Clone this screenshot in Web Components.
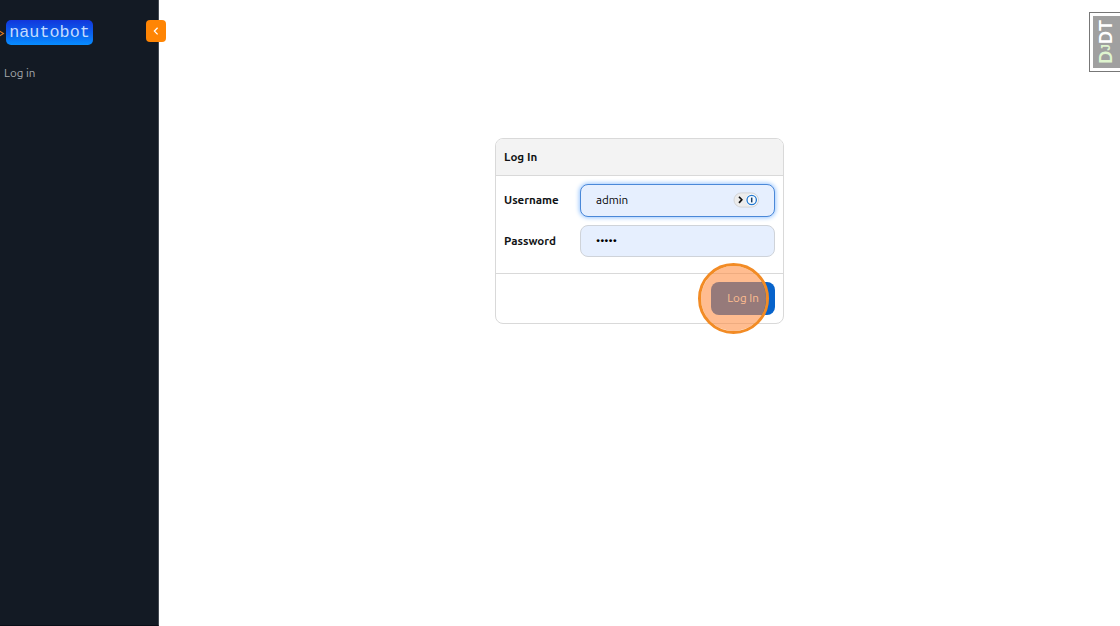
<!DOCTYPE html>
<html lang="en">
<head>
<meta charset="utf-8">
<title>Log In - Nautobot</title>
<style>
    html, body {
        margin: 0;
        height: 100%;
        overflow: hidden;
    }
    body {
        background: #fff;
        color: #111315;
        font: 11.6px/16px Ubuntu, "Noto Sans", sans-serif;
    }
</style>
</head>
<body>
<app-shell>
    <side-nav slot="nav">
        <nav-link>Log in</nav-link>
    </side-nav>
    <login-card heading="Log In">
        <form-field label="Username" value="admin" focused></form-field>
        <form-field label="Password" value="•••••" secret></form-field>
        <submit-button slot="footer">Log In</submit-button>
    </login-card>
</app-shell>
<debug-handle></debug-handle>

<script>
class AppShell extends HTMLElement {

    constructor() {
        super();
        this.shadow = this.attachShadow({ mode: 'open' });
    }

    connectedCallback() {
        this.shadow.innerHTML =
        /*html*/`
        <style>
            :host{
                display: flex;
                height: 100%;
            }
            main{
                flex: 1;
                display: flex;
                justify-content: center;
                align-items: flex-start;
                padding-top: 138px;
            }
        </style>

        <slot name="nav"></slot>
        <main><slot></slot></main>
        `
    }
}

class SideNav extends HTMLElement {

    constructor() {
        super();
        this.shadow = this.attachShadow({ mode: 'open' });
    }

    connectedCallback() {
        this.shadow.innerHTML =
        /*html*/`
        <style>
            :host{
                display: block;
                position: relative;
                box-sizing: border-box;
                flex: 0 0 159px;
                background: #131a24;
                border-right: 1px solid #444a52;
                border-bottom: 1px solid #090e18;
            }
            header{
                display: flex;
                align-items: center;
                padding-top: 20px;
                height: 25px;
            }
            .prompt{
                width: 6px;
                height: 25px;
                flex: none;
            }
            .logo{
                box-sizing: border-box;
                width: 87px;
                height: 25px;
                border-radius: 5px;
                background: linear-gradient(#1236dc, #0b62ee 55%, #078dff);
                color: #c4dcff;
                font: 16.8px/26px "Courier New", "Liberation Mono", monospace;
                text-align: center;
            }
            nav{
                padding: 20px 4px;
            }
            button{
                position: absolute;
                top: 20px;
                right: -8px;
                width: 20px;
                height: 22px;
                padding: 0;
                border: 0;
                border-radius: 4px;
                background: #ff8504;
            }
            button svg{
                display: block;
            }
        </style>

        <header>
            <svg class="prompt" viewBox="0 0 6 25" fill="none" stroke="#e47b20" stroke-width="1.1"><path d="M-.5 11 3.5 13.5-.5 16" /></svg>
            <div class="logo">nautobot</div>
        </header>
        <nav><slot></slot></nav>
        <button aria-label="Collapse">
            <svg width="20" height="22" viewBox="0 0 20 22" fill="none" stroke="#fff" stroke-width="1.3"><path d="M11.6 7.8 8.4 11.1 11.6 14.4" /></svg>
        </button>
        `
    }
}

class NavLink extends HTMLElement {

    constructor() {
        super();
        this.shadow = this.attachShadow({ mode: 'open' });
    }

    connectedCallback() {
        this.shadow.innerHTML =
        /*html*/`
        <style>
            :host{
                display: block;
                color: #a6a9ad;
            }
        </style>
        <slot></slot>
        `
    }
}

class LoginCard extends HTMLElement {

    constructor() {
        super();
        this.shadow = this.attachShadow({ mode: 'open' });
    }

    connectedCallback() {
        this.shadow.innerHTML =
        /*html*/`
        <style>
            :host{
                display: block;
                box-sizing: border-box;
                width: 289px;
                border: 1px solid #d9d9d9;
                border-radius: 8px;
            }
            header{
                box-sizing: border-box;
                height: 37px;
                padding: 10px 8px;
                border-bottom: 1px solid #d9d9d9;
                border-radius: 7px 7px 0 0;
                background: #f3f3f3;
                font-weight: 700;
            }
            section{
                display: flex;
                flex-direction: column;
                gap: 8px;
                padding: 8px 8px 16px;
            }
            footer{
                display: flex;
                justify-content: flex-end;
                padding: 8px;
                border-top: 1px solid #d9d9d9;
            }
        </style>

        <header>${this.getAttribute('heading')}</header>
        <section><slot></slot></section>
        <footer><slot name="footer"></slot></footer>
        `
    }
}

class FormField extends HTMLElement {

    constructor() {
        super();
        this.shadow = this.attachShadow({ mode: 'open' });
    }

    connectedCallback() {
        // the password manager badge only shows in the focused field
        const badge = this.hasAttribute('focused')
            ? `<svg width="26" height="16" viewBox="0 0 26 16" fill="none">
                <rect x="1" y=".9" width="24.5" height="14.2" rx="7.1" fill="#ececec" stroke="#d3d5d8" />
                <path d="M6 4.7 8.8 7.8 6 10.9" stroke="#111" stroke-width="1.7" />
                <circle cx="18.7" cy="8" r="6" fill="#fff" />
                <circle cx="18.7" cy="8" r="4.7" fill="#f5faff" stroke="#2278d0" stroke-width="1.3" />
                <path d="M18.7 5.6v4.8" stroke="#173d66" stroke-width="1.5" />
            </svg>`
            : ''

        this.shadow.innerHTML =
        /*html*/`
        <style>
            :host{
                display: flex;
                align-items: center;
            }
            label{
                flex: 0 0 76px;
                font-weight: 700;
            }
            .control{
                box-sizing: border-box;
                flex: 1;
                display: flex;
                align-items: center;
                justify-content: space-between;
                height: 32.5px;
                padding: 0 15px;
                border: 1px solid #cfd3d9;
                border-radius: 8px;
                background: #e6effe;
                color: #000;
            }
            :host([focused]) .control{
                border-color: #4a88d8;
                box-shadow: 0 0 4px 1px #9cc8ff;
            }
            :host([secret]) .control{
                font-size: 11.6px;
            }
        </style>

        <label>${this.getAttribute('label')}</label>
        <div class="control"><span>${this.getAttribute('value')}</span>${badge}</div>
        `
    }
}

class SubmitButton extends HTMLElement {

    constructor() {
        super();
        this.shadow = this.attachShadow({ mode: 'open' });
    }

    connectedCallback() {
        this.shadow.innerHTML =
        /*html*/`
        <style>
            :host{
                display: block;
                position: relative;
            }
            button{
                display: block;
                width: 64px;
                height: 32.5px;
                padding: 0;
                border: 0;
                border-radius: 8px;
                background: #0763cb;
                color: #fff;
                font: inherit;
            }
            .click{
                position: absolute;
                box-sizing: border-box;
                left: -13px;
                top: -19px;
                width: 71px;
                height: 71px;
                border: 3px solid #f28b25;
                border-radius: 50%;
                background: rgba(255, 140, 64, .58);
                background-clip: padding-box;
                pointer-events: none;
            }
        </style>

        <button type="submit"><slot></slot></button>
        <div class="click"></div>
        `
    }
}

class DebugHandle extends HTMLElement {

    constructor() {
        super();
        this.shadow = this.attachShadow({ mode: 'open' });
    }

    connectedCallback() {
        this.shadow.innerHTML =
        /*html*/`
        <style>
            :host{
                position: fixed;
                top: 12px;
                right: 0;
                box-sizing: border-box;
                width: 31px;
                height: 60px;
                padding: 3px 0 3px 3px;
                border: 1px solid #777;
                border-right: 0;
                background: #fff;
            }
            div{
                display: flex;
                align-items: center;
                justify-content: center;
                height: 100%;
                background: #a0a0a0;
                color: #fff;
                font: 700 18px/27px "Liberation Sans", sans-serif;
            }
            span{
                writing-mode: vertical-rl;
                transform: rotate(180deg);
                white-space: nowrap;
            }
            b{
                color: #dff5cf;
            }
            small{
                font-size: 12px;
            }
        </style>

        <div><span><b>D<small>J</small></b>DT</span></div>
        `
    }
}

customElements.define('app-shell', AppShell);
customElements.define('side-nav', SideNav);
customElements.define('nav-link', NavLink);
customElements.define('login-card', LoginCard);
customElements.define('form-field', FormField);
customElements.define('submit-button', SubmitButton);
customElements.define('debug-handle', DebugHandle);
</script>
</body>
</html>
